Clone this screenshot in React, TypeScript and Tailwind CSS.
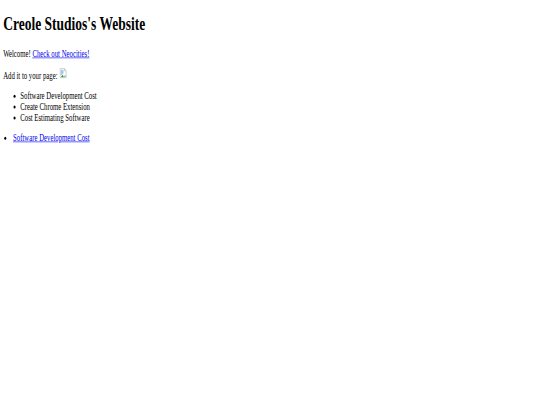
import React from 'react';

function BrokenImage() {
  return (
    <svg width="19" height="18" viewBox="0 0 16 16" className="inline align-baseline -mt-[2px]">
      <path d="M2 1h9l3.500 3.500V15H2z" fill="#fff" stroke="#b4b4b4" />
      <path d="M11 1v3.500h3.500" fill="#e8e8e8" stroke="#b4b4b4" />
      <path d="M3 3h6v5L6 10l-3 1z" fill="#a9c6f2" />
      <path d="M3 14l4-4 3 4z" fill="#3f9e4d" />
      <path d="M9 14l4-4v4z" fill="#6fbf73" />
    </svg>
  );
}

export default function App() {
  return (
    <div className="w-[540px] h-[405px] overflow-hidden bg-white">
      <div className="w-[1280px] h-[675px] origin-top-left scale-x-[0.4219] scale-y-[0.6] px-[7.5px] pt-px font-['Liberation_Serif',serif] text-base leading-[normal] text-black">
        <h1 className="text-[32px] leading-[normal] font-bold mt-[20px] mb-[23px]">Creole Studios's Website</h1>
        <p className="my-4">
          Welcome! <a href="#" className="text-[#0000ee] underline">Check out Neocities!</a>
        </p>
        <p className="my-4">
          Add it to your page: <BrokenImage />
        </p>
        <ul className="list-disc pl-[40.5px] my-4">
          <li>Software Development Cost</li>
          <li>Create Chrome Extension</li>
          <li>Cost Estimating Software</li>
        </ul>
        <ul className="list-disc pl-[18.5px] my-4">
          <li><a href="#" className="ml-[5px] text-[#0000ee] underline">Software Development Cost</a></li>
        </ul>
      </div>
    </div>
  );
}
